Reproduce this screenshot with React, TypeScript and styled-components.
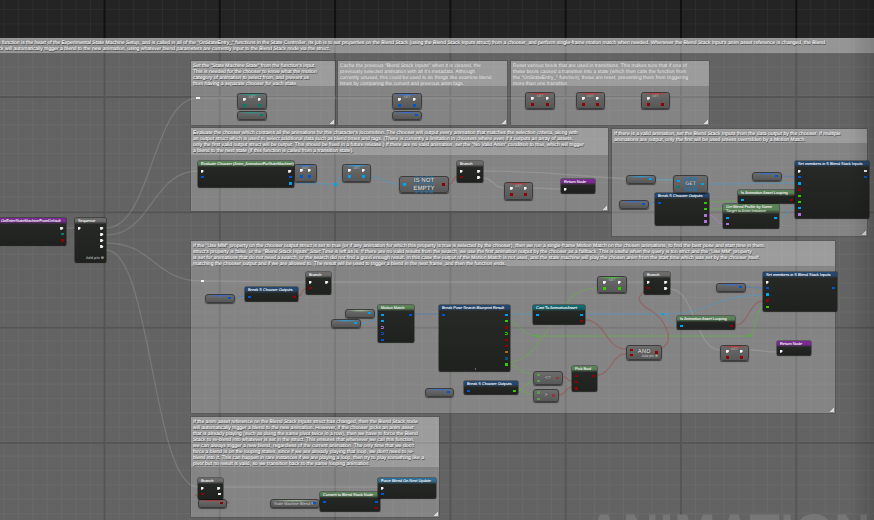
import styled, { createGlobalStyle, css } from "styled-components";

const GlobalStyle = createGlobalStyle`
  html, body {
    margin: 0;
    background: #242424;
  }
  body {
    font-family: "Liberation Sans", Arial, sans-serif;
    text-rendering: geometricPrecision;
  }
`;

// --- data ----------------------------------------------------------------

const PIN_COLORS: Record<string, string> = {
  b: "#0058d0",
  c: "#00a2ee",
  r: "#8e0303",
  g: "#33cc00",
  t: "#00806c",
  p: "#b272dc",
  o: "#a36c12",
  d: "#00587a",
  h: "#5f9a50",
  m: "#8a3a3a",
};

const HEADERS: Record<string, string> = {
  blue: "#24476f",
  green: "#5a8258",
  grey: "#6b6b6b",
  purple: "#7a2a92",
  teal: "#0f6a72",
  sky: "#2d6d96",
};

type Comment = {
  x: number;
  y: number;
  w: number;
  h: number;
  head: number;
  dim?: boolean;
  lines: string[];
};

const COMMENTS: Comment[] = [
  {
    x: 191, y: 61, w: 144, h: 64, head: 25,
    lines: [
      'Set the "State Machine State" from the function\'s input.',
      "This is needed for the chooser to know what the motion",
      "category of animation to select from, and prevent us",
      "from having a separate chooser for each state.",
    ],
  },
  {
    x: 338, y: 61, w: 169, h: 64, head: 25, dim: true,
    lines: [
      'Cache the previous "Blend Stack Inputs" when it is cleared, the',
      "previously selected animation with all it's metadata. Although",
      "currently unused, this could be used to do things like examine blend",
      "times by comparing the current and previous anim tags.",
    ],
  },
  {
    x: 511, y: 61, w: 198, h: 64, head: 25, dim: true,
    lines: [
      "Reset various bools that are used in transitions. This makes sure that if one of",
      "these bools caused a transition into a state (which then calls the function from",
      'the "OnStateEntry_" function), these are reset, preventing them from triggering',
      "more than one transition.",
    ],
  },
  {
    x: 191, y: 128, w: 417, h: 83, head: 27,
    lines: [
      "Evaluate the chooser which contains all the animations for this character's locomotion. The chooser will output every animation that matches the selection criteria, along with",
      "an output struct which is used to select additional data such as blend times and tags. (There is currently a limitation in choosers where even if it outputs an array of assets,",
      'only the first valid output struct will be output. This should be fixed in a future release.) If there are no valid animation, set the "No Valid Anim" condition to true, which will trigger',
      "a blend to the next state (if this function is called from a transition state).",
    ],
  },
  {
    x: 612, y: 129, w: 255, h: 107, head: 14,
    lines: [
      "If there is a valid animation, set the Blend Stack Inputs from the data output by the chooser. If multiple",
      "animations are output, only the first will be used unless overridden by a Motion Match.",
    ],
  },
  {
    x: 191, y: 241, w: 644, h: 172, head: 25,
    lines: [
      'If the "Use MM" property on the chooser output struct is set to true (or if any animation for which this property is true is selected by the chooser), then we run a single-frame Motion Match on the chosen animations, to find the best pose and start time in them.',
      'struct\'s property is false, or the "Blend Stack Inputs" Start Time is left as is. If there are no valid results from the search, we use the first animation output by the chooser as a fallback. This is useful when the query is too strict and the "Use MM" property',
      "is set for animations that do not need a search, or the search did not find a good enough result. In this case the output of the Motion Match is not used, and the state machine will play the chosen anim from the start time which was set by the chooser itself.",
      "matching the chooser output and if we are allowed to. The result will be used to trigger a blend in the next frame, and then the function ends.",
    ],
  },
  {
    x: 191, y: 417, w: 248, h: 100, head: 50,
    lines: [
      "If the anim asset reference on the Blend Stack Inputs struct has changed, then the Blend Stack node",
      "will automatically trigger a blend to the new animation. However, if the chooser picks an anim asset",
      "that is already playing (such as doing the same pivot twice in a row), then we have to force the Blend",
      "Stack to re-blend into whatever is set in the struct. This ensures that whenever we call this function,",
      "we can always trigger a new blend, regardless of the current animation. The only time that we don't",
      "force a blend is on the looping states, since if we are already playing that loop, we don't need to re-",
      "blend into it. This can happen in rare instances if we are playing a loop, then try to play something like a",
      "pivot but no result is valid, so we transition back to the same looping animation.",
    ],
  },
];

type BlackNode = {
  x: number;
  y: number;
  w: number;
  h: number;
  title: string;
  color: keyof typeof HEADERS;
  head?: number;
  sub?: string;
  rows: string[];
  addPin?: boolean;
};

// rows are two characters, left pin then right pin: x is exec, - is empty,
// upper case is a hollow pin
const BLACK_NODES: BlackNode[] = [
  { x: -2, y: 218, w: 68, h: 27, title: "OnEnterStateMachineFromDefault", color: "purple", rows: ["-x", "-t", "-r"] },
  { x: 75, y: 218, w: 31, h: 44, title: "Sequence", color: "grey", rows: ["xx", "-x", "-x", "-x"], addPin: true },
  { x: 198, y: 161, w: 96, h: 26, title: "Evaluate Chooser (Anim_AnimationForStateMachine)", color: "green", rows: ["xx", "Bb", "-c"] },
  { x: 457, y: 161, w: 26, h: 21, title: "Branch", color: "grey", rows: ["xx", "rx"] },
  { x: 561, y: 179, w: 34, h: 14, title: "Return Node", color: "purple", rows: ["x-"] },
  { x: 655, y: 193, w: 54, h: 32, title: "Break S Chooser Outputs", color: "blue", rows: ["bg", "-g", "-p", "-p"] },
  { x: 738, y: 190, w: 57, h: 13, title: "Is Animation Asset Looping", color: "green", rows: ["cr"] },
  { x: 723, y: 204, w: 56, h: 24, title: "Get Blend Profile by Name", sub: "Target is Anim Instance", head: 10, color: "green", rows: ["cc", "p-"] },
  { x: 795, y: 161, w: 74, h: 57, title: "Set members in S Blend Stack Inputs", color: "blue", rows: ["xX", "bB", "c-", "r-", "g-", "g-", "c-", "p-"] },
  { x: 245, y: 287, w: 53, h: 14, title: "Break S Chooser Outputs", color: "blue", rows: ["br"] },
  { x: 306, y: 272, w: 25, h: 22, title: "Branch", color: "grey", rows: ["xx", "r-"] },
  { x: 378, y: 305, w: 36, h: 37, title: "Motion Match", color: "green", rows: ["cb", "c-", "P-", "B-", "B-"] },
  { x: 439, y: 305, w: 71, h: 66, title: "Break Pose Search Blueprint Result", color: "blue", rows: ["bc", "-g", "-r", "-G", "-r", "-r", "-o", "-d", "-g"] },
  { x: 464, y: 381, w: 54, h: 13, title: "Break S Chooser Outputs", color: "blue", rows: ["bg"] },
  { x: 533, y: 305, w: 52, h: 19, title: "Cast To AnimationAsset", color: "teal", rows: ["cc", "-r"] },
  { x: 644, y: 272, w: 26, h: 22, title: "Branch", color: "grey", rows: ["xx", "rx"] },
  { x: 763, y: 272, w: 74, h: 39, title: "Set members in S Blend Stack Inputs", color: "blue", rows: ["x-", "bB", "c-", "r-", "g-"] },
  { x: 677, y: 316, w: 58, h: 13, title: "Is Animation Asset Looping", color: "green", rows: ["cr"] },
  { x: 777, y: 341, w: 34, h: 14, title: "Return Node", color: "purple", rows: ["x-"] },
  { x: 572, y: 366, w: 25, h: 25, title: "Pick Bool", color: "green", rows: ["rr", "r-", "r-"] },
  { x: 198, y: 478, w: 25, h: 21, title: "Branch", color: "grey", rows: ["xx", "rX"] },
  { x: 320, y: 492, w: 60, h: 19, title: "Convert to Blend Stack Node", color: "green", rows: ["bb", "-r"] },
  { x: 378, y: 478, w: 58, h: 20, title: "Force Blend On Next Update", color: "sky", rows: ["x-", "b-"] },
];

type CompactNode = {
  x: number;
  y: number;
  w: number;
  h: number;
  glow: string;
  rows: string[];
};

const SET_NODES: CompactNode[] = [
  { x: 237, y: 93, w: 30, h: 16, glow: "#1f9c88", rows: ["xx", "tt"] },
  { x: 392, y: 93, w: 30, h: 16, glow: "#2f6fe0", rows: ["xx", "bb"] },
  { x: 525, y: 92, w: 30, h: 17, glow: "#c82e2e", rows: ["xx", "rr"] },
  { x: 576, y: 92, w: 29, h: 17, glow: "#c82e2e", rows: ["xx", "rr"] },
  { x: 641, y: 92, w: 29, h: 17, glow: "#c82e2e", rows: ["x-", "rr"] },
  { x: 294, y: 164, w: 23, h: 18, glow: "#2f6fe0", rows: ["xx", "bb"] },
  { x: 342, y: 164, w: 29, h: 18, glow: "#25a4e8", rows: ["xx", "cc"] },
  { x: 504, y: 182, w: 29, h: 18, glow: "#c82e2e", rows: ["xx", "rr"] },
  { x: 597, y: 276, w: 30, h: 17, glow: "#46c43a", rows: ["xx", "gg"] },
  { x: 720, y: 345, w: 29, h: 16, glow: "#c82e2e", rows: ["xx", "rr"] },
];

const GETTERS: { x: number; y: number; w: number; glow: string; pin: string; label?: string }[] = [
  { x: 237, y: 111, w: 30, glow: "#1f9c88", pin: "t" },
  { x: 392, y: 111, w: 30, glow: "#2f6fe0", pin: "b" },
  { x: 626, y: 175, w: 30, glow: "#25a4e8", pin: "c" },
  { x: 619, y: 200, w: 30, glow: "#2f6fe0", pin: "b" },
  { x: 752, y: 172, w: 30, glow: "#2f6fe0", pin: "b" },
  { x: 205, y: 294, w: 30, glow: "#2f6fe0", pin: "b" },
  { x: 345, y: 309, w: 30, glow: "#9fd49a", pin: "c" },
  { x: 331, y: 319, w: 30, glow: "#25a4e8", pin: "c" },
  { x: 425, y: 388, w: 29, glow: "#2f6fe0", pin: "b" },
  { x: 716, y: 283, w: 30, glow: "#2f6fe0", pin: "b" },
  { x: 198, y: 499, w: 29, glow: "#c82e2e", pin: "r" },
  { x: 270, y: 499, w: 50, glow: "#a8c8a0", pin: "b", label: "State Machine Blend Stack" },
];

type Wire = [number, number, number, number, string];

const EXEC = "rgba(235,235,235,.15)";
const BLUE = "rgba(40,120,220,.32)";
const SKY = "rgba(40,170,240,.3)";
const RED = "rgba(170,50,50,.34)";
const GREEN = "rgba(90,200,50,.3)";
const PURPLE = "rgba(190,130,230,.4)";

const WIRES: Wire[] = [
  [66, 228, 75, 228, EXEC],
  [106, 228, 198, 98, EXEC],
  [106, 235, 198, 171, EXEC],
  [106, 243, 202, 281, EXEC],
  [106, 250, 198, 487, EXEC],
  [200, 98, 237, 98, EXEC],
  [267, 98, 392, 98, EXEC],
  [422, 98, 525, 98, EXEC],
  [555, 98, 576, 98, EXEC],
  [605, 98, 641, 98, EXEC],
  [294, 183, 335, 184, SKY],
  [335, 184, 342, 177, SKY],
  [371, 177, 399, 184, SKY],
  [449, 184, 457, 177, RED],
  [483, 178, 504, 188, EXEC],
  [533, 188, 561, 189, EXEC],
  [483, 171, 678, 180, EXEC],
  [656, 179, 673, 180, SKY],
  [649, 204, 655, 202, BLUE],
  [708, 184, 795, 183, SKY],
  [782, 176, 795, 177, BLUE],
  [709, 202, 795, 195, GREEN],
  [709, 209, 795, 201, GREEN],
  [709, 215, 723, 224, PURPLE],
  [779, 218, 795, 207, SKY],
  [204, 281, 306, 282, EXEC],
  [235, 298, 245, 296, BLUE],
  [298, 296, 306, 289, RED],
  [375, 312, 378, 314, SKY],
  [361, 323, 378, 320, SKY],
  [414, 314, 439, 314, BLUE],
  [504, 314, 533, 314, SKY],
  [585, 314, 663, 314, SKY],
  [663, 314, 763, 295, SKY],
  [663, 314, 677, 325, SKY],
  [504, 320, 537, 336, GREEN],
  [537, 336, 749, 336, GREEN],
  [749, 336, 763, 307, GREEN],
  [504, 363, 597, 288, GREEN],
  [504, 363, 533, 374, GREEN],
  [518, 390, 533, 382, GREEN],
  [518, 390, 533, 395, GREEN],
  [585, 320, 626, 349, RED],
  [597, 375, 626, 354, RED],
  [563, 377, 572, 381, RED],
  [559, 395, 572, 387, RED],
  [735, 325, 763, 301, RED],
  [670, 289, 720, 350, EXEC],
  [670, 282, 763, 282, EXEC],
  [749, 350, 777, 352, EXEC],
  [331, 282, 597, 282, EXEC],
  [627, 282, 644, 282, EXEC],
  [746, 287, 763, 288, BLUE],
  [223, 487, 378, 487, EXEC],
  [318, 503, 325, 501, BLUE],
  [374, 501, 382, 494, BLUE],
  [227, 503, 198, 495, RED],
];

const wirePath = ([x1, y1, x2, y2]: Wire) => {
  const bend = Math.max(Math.abs(x2 - x1) * 0.5, 6);
  return `M${x1} ${y1}C${x1 + bend} ${y1} ${x2 - bend} ${y2} ${x2} ${y2}`;
};

// the AND node's output loops back to the Branch condition
const AND_LOOP = "M662 348C676 340 664 318 650 310C636 302 636 296 648 289";

// --- canvas --------------------------------------------------------------

const GRID_DARK = css`
  background-color: #242424;
  background-image:
    linear-gradient(to right, #101010 2px, transparent 2px),
    linear-gradient(to bottom, #101010 2px, transparent 2px),
    linear-gradient(to right, #2d2d2d 1px, transparent 1px),
    linear-gradient(to bottom, #2d2d2d 1px, transparent 1px);
  background-size: 115.3px 115.3px, 115.3px 115.3px, 14.41px 14.41px, 14.41px 14.41px;
  background-position: 103.5px 0, 0 96px, 3.5px 0, 0 9px;
`;

const Canvas = styled.main`
  position: relative;
  width: 874px;
  height: 520px;
  overflow: hidden;
  ${GRID_DARK}
`;

const Vignette = styled.div`
  position: absolute;
  inset: 0;
  pointer-events: none;
  background: linear-gradient(to right, transparent 97%, rgba(0, 0, 0, 0.14));
`;

const OuterComment = styled.section`
  position: absolute;
  left: 0;
  right: 0;
  top: 38px;
  bottom: 0;
  background: rgba(255, 255, 255, 0.29);
`;

const OuterHeader = styled.header`
  height: 15px;
  padding-top: 2px;
  box-sizing: border-box;
  background: rgba(255, 255, 255, 0.32);
  text-indent: -9px;
`;

const Watermark = styled.div`
  position: absolute;
  left: 586px;
  top: 507px;
  font-size: 50px;
  line-height: 1;
  font-weight: 700;
  letter-spacing: 0.6px;
  color: #767676;
  white-space: nowrap;
`;

const TextLine = styled.div<{ $dim?: boolean }>`
  font-size: 5.05px;
  line-height: 6.1px;
  height: 6.1px;
  white-space: nowrap;
  color: ${(p) => (p.$dim ? "#dcdcdc" : "#f4f4f4")};
  text-shadow: ${(p) =>
    p.$dim
      ? "0 0 0.7px #ddd, 0.4px 0.4px 0.7px rgba(70,70,70,.7)"
      : "0 0 0.7px #eee, 0.5px 0.5px 0.6px #262626, 0 0 1.2px #3a3a3a"};
`;

const CommentBox = styled.section<{ $x: number; $y: number; $w: number; $h: number }>`
  position: absolute;
  left: ${(p) => p.$x}px;
  top: ${(p) => p.$y}px;
  width: ${(p) => p.$w}px;
  height: ${(p) => p.$h}px;
  background: rgba(255, 255, 255, 0.21);
  box-shadow: 0 0 0 1px rgba(70, 70, 70, 0.35);

  &::after {
    content: "";
    position: absolute;
    right: 1px;
    bottom: 1px;
    width: 4px;
    height: 4px;
    background: linear-gradient(135deg, transparent 50%, #d8d8d8 50%);
  }
`;

const CommentHeader = styled.header<{ $h: number }>`
  height: ${(p) => p.$h}px;
  box-sizing: border-box;
  padding: 1.5px 2px 0;
  background: rgba(255, 255, 255, 0.2);
  overflow: hidden;
`;

const WireLayer = styled.svg`
  position: absolute;
  left: 0;
  top: 0;
`;

const Knot = styled.i<{ $x: number; $y: number; $c: string; $w?: number; $h?: number }>`
  position: absolute;
  left: ${(p) => p.$x - (p.$w ?? 3) / 2}px;
  top: ${(p) => p.$y - (p.$h ?? 3) / 2}px;
  width: ${(p) => p.$w ?? 3}px;
  height: ${(p) => p.$h ?? 3}px;
  background: ${(p) => p.$c};
`;

// --- nodes ---------------------------------------------------------------

const placed = css<{ $x: number; $y: number; $w: number; $h: number }>`
  position: absolute;
  left: ${(p) => p.$x}px;
  top: ${(p) => p.$y}px;
  width: ${(p) => p.$w}px;
  height: ${(p) => p.$h}px;
  box-sizing: border-box;
`;

const NodeFrame = styled.article<{ $x: number; $y: number; $w: number; $h: number }>`
  ${placed}
  display: flex;
  flex-direction: column;
  background: linear-gradient(#272a26, #1f211e);
  border-radius: 1px;
  box-shadow: 0 1px 1px rgba(0, 0, 0, 0.55), 0 0 0 0.5px rgba(0, 0, 0, 0.6);
  overflow: hidden;
`;

const NodeHead = styled.header<{ $c: string; $h: number }>`
  flex: none;
  height: ${(p) => p.$h}px;
  padding: 0.6px 1px 0 3px;
  box-sizing: border-box;
  background: linear-gradient(to bottom, ${(p) => p.$c}, ${(p) => p.$c} 55%, #2a2c29);
  color: #e6e6e6;
  text-shadow: 0 0 0.4px #ddd;
  font-size: 3.9px;
  line-height: 4.8px;
  white-space: nowrap;
  overflow: hidden;
`;

const NodeSub = styled.div`
  color: #b8c8b4;
`;

const PinRows = styled.div<{ $top: number }>`
  display: flex;
  flex-direction: column;
  padding: ${(p) => p.$top}px 2.5px 0;
`;

const PinRow = styled.div<{ $h?: number }>`
  height: ${(p) => p.$h ?? 6.15}px;
  display: flex;
  align-items: center;
  justify-content: space-between;
`;

const Pin = styled.i<{ $c: string; $exec?: boolean; $hollow?: boolean }>`
  display: block;
  flex: none;
  width: ${(p) => (p.$exec ? 3.4 : 3)}px;
  height: ${(p) => (p.$exec ? 3.2 : 2.4)}px;
  box-sizing: border-box;
  ${(p) =>
    p.$exec
      ? css`
          background: #f4f4f4;
          clip-path: polygon(0 0, 55% 0, 100% 50%, 55% 100%, 0 100%);
        `
      : p.$hollow
        ? css`
            border: 1px solid ${p.$c};
            border-left: none;
            border-radius: 0 2px 2px 0;
            width: 3px;
          `
        : css`
            background: ${p.$c};
          `}
`;

const EmptyPin = styled.span`
  width: 3px;
`;

const AddPin = styled.div`
  margin-top: auto;
  padding: 0 2px 1px 0;
  text-align: right;
  font-size: 3.8px;
  line-height: 5px;
  font-weight: 700;
  color: #a9a9a9;
`;

const Compact = styled.article<{ $x: number; $y: number; $w: number; $h: number; $glow: string }>`
  ${placed}
  padding: 1.8px 2.5px 0;
  border-radius: 2.5px;
  border: 0.5px solid #3c3c3c;
  background:
    radial-gradient(ellipse 50% 2.5px at 50% 0, ${(p) => p.$glow}, transparent),
    linear-gradient(#6a6a6a, #585858);
  box-shadow: 0 1px 1px rgba(0, 0, 0, 0.55);
`;

const CompactLabel = styled.span`
  position: absolute;
  left: 0;
  right: 0;
  top: 0.6px;
  text-align: center;
  font-size: 3.6px;
  line-height: 5px;
  color: #bdbdbd;
`;

const Getter = styled.article<{ $x: number; $y: number; $w: number; $glow: string }>`
  position: absolute;
  left: ${(p) => p.$x}px;
  top: ${(p) => p.$y}px;
  width: ${(p) => p.$w}px;
  height: 8.5px;
  box-sizing: border-box;
  padding: 0 3px;
  display: flex;
  align-items: center;
  justify-content: flex-end;
  border-radius: 3px;
  border: 0.5px solid #3c3c3c;
  background:
    radial-gradient(ellipse 50% 2px at 50% 0, ${(p) => p.$glow}, transparent),
    linear-gradient(#6c6c6c, #565656);
  box-shadow: 0 1px 1px rgba(0, 0, 0, 0.5);
`;

const GetterLabel = styled.span`
  flex: 1;
  font-size: 3.9px;
  color: #cfcfcf;
  white-space: nowrap;
  overflow: hidden;
`;

const PureNode = styled.article<{ $x: number; $y: number; $w: number; $h: number }>`
  ${placed}
  border-radius: 3px;
  border: 0.5px solid #3c3c3c;
  background: linear-gradient(#6c6c6c, #585858);
  box-shadow: 0 1px 1px rgba(0, 0, 0, 0.55);
  display: flex;
  align-items: center;
  justify-content: space-between;
  padding: 0 3px;
`;

const PureCenter = styled.div<{ $size: number }>`
  position: relative;
  flex: 1;
  text-align: center;
  font-size: ${(p) => p.$size}px;
  line-height: ${(p) => p.$size + 1.6}px;
  font-weight: 700;
  color: #c8c8c8;
  text-shadow: 0 0 1px #222;
`;

const PureText = styled.span`
  position: relative;
`;

const PinColumn = styled.div<{ $gap?: number }>`
  display: flex;
  flex-direction: column;
  gap: ${(p) => p.$gap ?? 3}px;
  z-index: 1;
`;

const GridBadge = styled.div<{ $cols: number; $size: number }>`
  position: absolute;
  left: 50%;
  top: 50%;
  transform: translate(-50%, -50%);
  display: grid;
  grid-template-columns: repeat(${(p) => p.$cols}, ${(p) => p.$size}px);
  gap: 1.4px;
  span {
    height: ${(p) => p.$size}px;
    background: rgba(30, 120, 190, 0.55);
  }
`;

const AddPinSmall = styled.div`
  position: absolute;
  right: 3px;
  bottom: 0.5px;
  font-size: 3.6px;
  line-height: 4.6px;
  color: #cfcfcf;
`;

const CenterDot = styled.i`
  position: absolute;
  left: 50%;
  bottom: 1.5px;
  width: 1.5px;
  height: 1.5px;
  border-radius: 50%;
  background: #777;
`;

// --- small parts ---------------------------------------------------------

function PinGlyph({ code }: { code: string }) {
  if (code === "-") return <EmptyPin />;
  if (code === "x") return <Pin $c="#fff" $exec />;
  if (code === "X") return <Pin $c="#f0f0f0" $hollow />;
  const lower = code.toLowerCase();
  return <Pin $c={PIN_COLORS[lower]} $hollow={code !== lower} />;
}

function Rows({ rows, top, height }: { rows: string[]; top: number; height?: number }) {
  return (
    <PinRows $top={top}>
      {rows.map((r, i) => (
        <PinRow key={i} $h={height}>
          <PinGlyph code={r[0]} />
          <PinGlyph code={r[1]} />
        </PinRow>
      ))}
    </PinRows>
  );
}

function Badge({ cols, size, count }: { cols: number; size: number; count: number }) {
  return (
    <GridBadge $cols={cols} $size={size}>
      {Array.from({ length: count }, (_, i) => (
        <span key={i} />
      ))}
    </GridBadge>
  );
}

export default function App() {
  return (
    <Canvas>
      <GlobalStyle />
      <OuterComment>
        <OuterHeader>
          <TextLine>
            This function is the heart of the Experimental State Machine Setup, and is called in all of the "OnStateEntry_" functions in the State Controller. Its job is to set properties on the Blend Stack (using the Blend Stack Inputs struct) from a chooser, and perform single-frame motion match when needed. Whenever the Blend Stack Input's anim asset reference is changed, the Blend
          </TextLine>
          <TextLine>
            Stack will automatically trigger a blend to the new animation, using whatever blend parameters are currently input to the Blend Stack node via the struct.
          </TextLine>
        </OuterHeader>
      </OuterComment>
      <Watermark>ANIMATION</Watermark>

      {COMMENTS.map((c) => (
        <CommentBox key={c.lines[0]} $x={c.x} $y={c.y} $w={c.w} $h={c.h}>
          <CommentHeader $h={c.head}>
            {c.lines.map((l) => (
              <TextLine key={l} $dim={c.dim}>
                {l}
              </TextLine>
            ))}
          </CommentHeader>
        </CommentBox>
      ))}

      <WireLayer width={874} height={520} fill="none" strokeWidth={1.3}>
        {WIRES.map((w, i) => (
          <path key={i} d={wirePath(w)} stroke={w[4]} />
        ))}
        <path d={AND_LOOP} stroke={RED} />
      </WireLayer>

      <Knot $x={198} $y={98} $c="#f4f4f4" $w={4} $h={2.5} />
      <Knot $x={202} $y={281} $c="#f4f4f4" $w={3} $h={2.5} />
      <Knot $x={335} $y={184} $c="#00a2ee" />
      <Knot $x={663} $y={314} $c="#00a2ee" $w={2.5} $h={2} />
      <Knot $x={537} $y={336} $c="#33cc00" $w={2.5} $h={2} />
      <Knot $x={749} $y={336} $c="#33cc00" $w={2.5} $h={2} />

      {SET_NODES.map((n) => (
        <Compact key={`${n.x}-${n.y}`} $x={n.x} $y={n.y} $w={n.w} $h={n.h} $glow={n.glow}>
          <CompactLabel>SET</CompactLabel>
          <Rows rows={n.rows} top={0} height={6.6} />
        </Compact>
      ))}

      {GETTERS.map((g) => (
        <Getter key={`${g.x}-${g.y}`} $x={g.x} $y={g.y} $w={g.w} $glow={g.glow}>
          {g.label && <GetterLabel>{g.label}</GetterLabel>}
          <PinGlyph code={g.pin} />
        </Getter>
      ))}

      {BLACK_NODES.map((n) => (
        <NodeFrame key={`${n.x}-${n.y}`} $x={n.x} $y={n.y} $w={n.w} $h={n.h}>
          <NodeHead $c={HEADERS[n.color]} $h={n.head ?? 6}>
            {n.title}
            {n.sub && <NodeSub>{n.sub}</NodeSub>}
          </NodeHead>
          <Rows rows={n.rows} top={1} height={6.2} />
          {n.addPin && <AddPin>Add pin ⊕</AddPin>}
          {n.w === 71 && <CenterDot />}
        </NodeFrame>
      ))}

      <PureNode $x={399} $y={176} $w={50} $h={17}>
        <PinGlyph code="c" />
        <PureCenter $size={6.2}>
          <Badge cols={4} size={3.4} count={16} />
          <PureText>
            IS NOT
            <br />
            EMPTY
          </PureText>
        </PureCenter>
        <PinGlyph code="r" />
      </PureNode>

      <PureNode $x={673} $y={175} $w={35} $h={18}>
        <PinColumn $gap={4}>
          <PinGlyph code="c" />
          <PinGlyph code="t" />
        </PinColumn>
        <PureCenter $size={5.2}>
          <Badge cols={3} size={3.6} count={9} />
          <PureText>GET</PureText>
        </PureCenter>
        <PinGlyph code="c" />
      </PureNode>

      <PureNode $x={626} $y={345} $w={36} $h={15}>
        <PinColumn $gap={2.2}>
          <PinGlyph code="r" />
          <PinGlyph code="r" />
        </PinColumn>
        <PureCenter $size={6}>AND</PureCenter>
        <PinGlyph code="r" />
        <AddPinSmall>Add pin ⊕</AddPinSmall>
      </PureNode>

      <PureNode $x={533} $y={371} $w={30} $h={14}>
        <PinColumn $gap={4}>
          <PinGlyph code="h" />
          <PinGlyph code="h" />
        </PinColumn>
        <PureCenter $size={5}>&lt;=</PureCenter>
        <PinGlyph code="m" />
      </PureNode>

      <PureNode $x={533} $y={389} $w={26} $h={13}>
        <PinColumn $gap={4}>
          <PinGlyph code="h" />
          <PinGlyph code="h" />
        </PinColumn>
        <PureCenter $size={5}>&gt;</PureCenter>
        <PinGlyph code="m" />
      </PureNode>

      <Vignette />
    </Canvas>
  );
}
